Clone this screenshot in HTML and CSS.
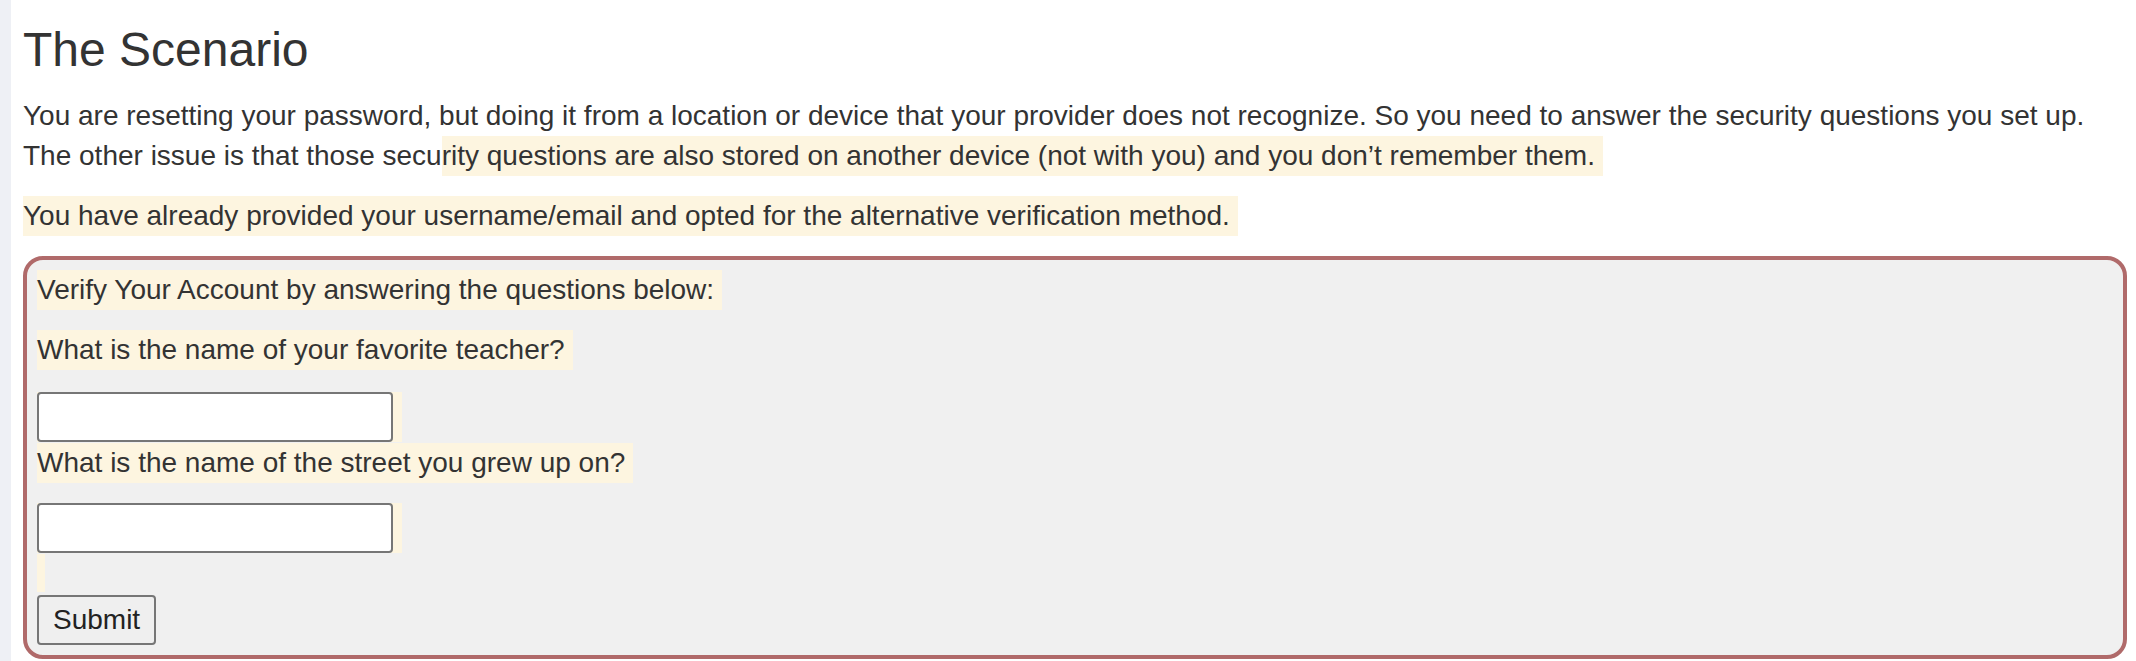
FILE: index.html
```html
<!DOCTYPE html>
<html lang="en">
<head>
<meta charset="utf-8">
<title>The Scenario</title>
<link rel="stylesheet" href="styles.css">
</head>
<body>
<div class="page">
  <aside class="strip"></aside>
  <main class="content">
    <h1 class="title">The Scenario</h1>
    <p class="para">You are resetting your password, but doing it from a location or device that your provider does not recognize. So you need to answer the security questions you set up.<br>The other issue is that those secu<span class="hl">rity questions are also stored on another device (not with you) and you don’t remember them.</span></p>
    <p class="para"><span class="hl">You have already provided your username/email and opted for the alternative verification method.</span></p>
    <form class="verify">
      <p class="line"><span class="hl">Verify Your Account by answering the questions below:</span></p>
      <p class="line line-q1"><span class="hl">What is the name of your favorite teacher?</span></p>
      <div class="field"><input class="answer" type="text"></div>
      <p class="line"><span class="hl">What is the name of the street you grew up on?</span></p>
      <div class="field"><input class="answer" type="text"></div>
      <div class="spacer"></div>
      <button class="submit" type="button">Submit</button>
    </form>
  </main>
</div>
</body>
</html>
```

FILE: styles.css
```css
html, body {
  margin: 0;
  padding: 0;
  background: #ffffff;
}

body {
  font-family: "Liberation Sans", Arial, sans-serif;
  font-size: 28px;
  line-height: 40px;
  color: #333333;
  overflow: hidden;
}

.page {
  display: flex;
  min-height: 100vh;
}

.strip {
  flex: 0 0 11px;
  background: #eef0f5;
}

.content {
  flex: 1 1 auto;
  padding: 0 9px 0 12px;
}

.title {
  margin: 23px 0 20px;
  font-size: 48px;
  line-height: 53px;
  font-weight: normal;
  color: #333333;
}

.para {
  margin: 0 0 20px;
}

.hl {
  background: #fdf5e0;
  padding: 4px 8px 5px 0;
}

.verify {
  margin: 0;
  border: 4px solid #b06a6a;
  border-radius: 20px;
  background: #f0f0f0;
  padding: 10px;
}

.line {
  margin: 0 0 20px;
}

.line-q1 {
  margin-bottom: 22px;
}

.field {
  width: fit-content;
  background: #fdf5e0;
  padding-right: 9px;
  margin-bottom: 1px;
}

.answer {
  display: block;
  box-sizing: border-box;
  width: 356px;
  height: 50px;
  margin: 0;
  padding: 0 8px;
  border: 2px solid #767676;
  border-radius: 4px;
  background: #ffffff;
  font-family: "Liberation Sans", Arial, sans-serif;
  font-size: 28px;
}

.spacer {
  width: 8px;
  height: 38px;
  background: #fdf5e0;
  margin-bottom: 3px;
}

.submit {
  display: block;
  box-sizing: border-box;
  height: 50px;
  margin: 0;
  padding: 7px 14px;
  border: 2px solid #767676;
  border-radius: 4px;
  background: #efefef;
  color: #222222;
  font-family: "Liberation Sans", Arial, sans-serif;
  font-size: 28px;
  line-height: 32px;
}
```
